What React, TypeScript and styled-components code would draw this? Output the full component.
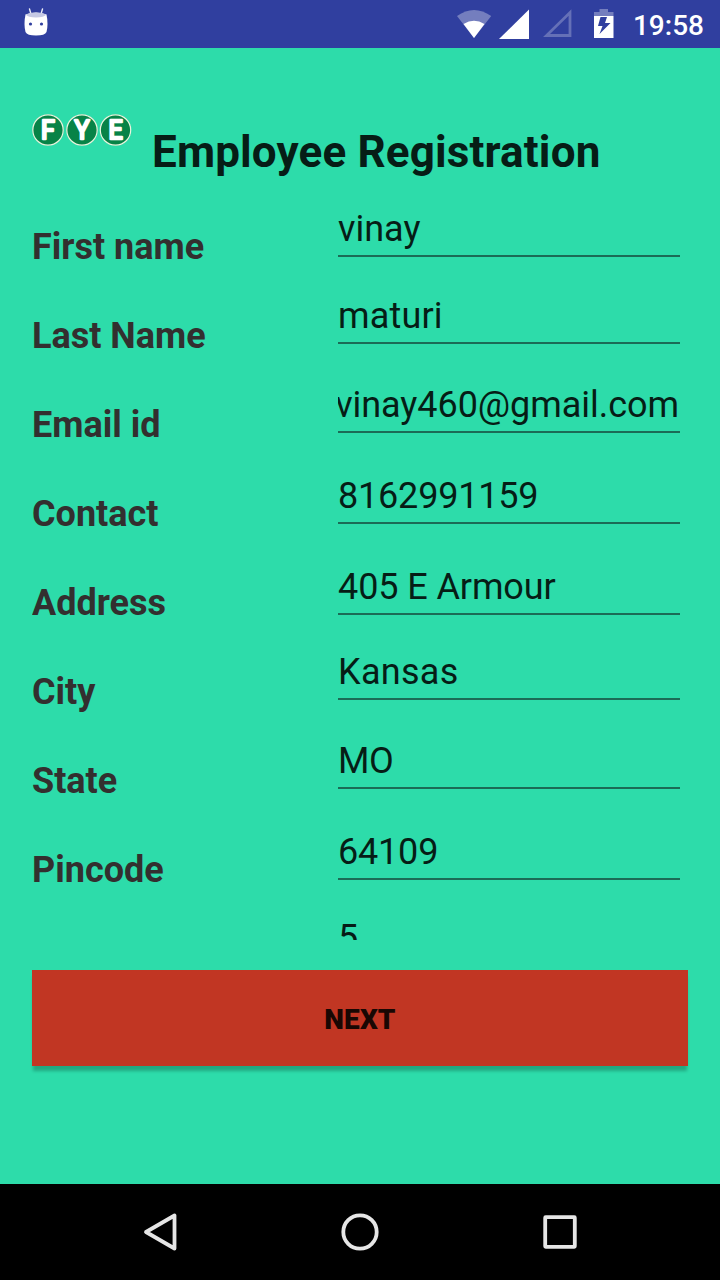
import React from "react";
import styled, { createGlobalStyle } from "styled-components";

const GlobalStyle = createGlobalStyle`
  * { box-sizing: border-box; }
  body { margin: 0; background: #2ddcaa; font-family: Roboto, "Liberation Sans", sans-serif; }
`;

const Screen = styled.div`
  width: 720px;
  height: 1280px;
  display: flex;
  flex-direction: column;
  overflow: hidden;
  background: #2ddcaa;
`;

const StatusBar = styled.header`
  height: 48px;
  flex: none;
  display: flex;
  align-items: center;
  justify-content: space-between;
  background: #303f9f;
  padding: 0 16px 0 20px;
`;

const StatusIcons = styled.div`
  display: flex;
  align-items: center;
`;

const Clock = styled.time`
  margin-left: 12px;
  padding-top: 4px;
  color: #fff;
  font-size: 28px;
  font-weight: 500;
  line-height: 44px;
`;

const Content = styled.main`
  flex: 1;
  padding: 0 32px;
`;

const Heading = styled.div`
  height: 152px;
  display: flex;
  align-items: flex-start;
  gap: 20px;
  padding-top: 65px;
`;

const Title = styled.h1`
  margin: 13px 0 0;
  font-size: 44px;
  line-height: 52px;
  font-weight: 700;
  letter-spacing: 0.15px;
  color: #061d16;
  white-space: nowrap;
`;

const Form = styled.form`
  height: 740px;
  display: grid;
  grid-template-columns: 306px 342px;
  overflow: hidden;
`;

const Labels = styled.div`
  display: flex;
  flex-direction: column;
  gap: 47px;
  padding-top: 26px;
`;

const Label = styled.label`
  font-size: 36px;
  line-height: 42px;
  font-weight: 700;
  color: #332f2f;
`;

const Fields = styled.div`
  display: flex;
  flex-direction: column;
`;

const Field = styled.div<{ $height: number; $scrolled?: boolean; $tracking?: number }>`
  flex: none;
  height: ${(p) => p.$height}px;
  display: flex;
  align-items: flex-end;
  justify-content: ${(p) => (p.$scrolled ? "flex-end" : "flex-start")};
  padding: 0 ${(p) => (p.$scrolled ? 1 : 0)}px 5px 0;
  border-bottom: 2px solid #1b6c56;
  overflow: hidden;
  font-size: 36px;
  line-height: 42px;
  letter-spacing: ${(p) => p.$tracking ?? 0}px;
  color: #061d16;
  white-space: nowrap;
`;

const NextButton = styled.button`
  display: block;
  width: 100%;
  height: 96px;
  margin-top: 30px;
  padding: 3px 0 0;
  border: 0;
  background: #c13623;
  color: #190703;
  font: 900 28px/33px Roboto, "Liberation Sans", sans-serif;
  letter-spacing: 0.1px;
  box-shadow: 0 6px 3px -1px rgba(0, 0, 0, 0.24);
`;

const NavBar = styled.nav`
  height: 96px;
  flex: none;
  display: flex;
  justify-content: center;
  align-items: center;
  gap: 152px;
  background: #000;
`;

const fields = [
  { label: "First name", value: "vinay", height: 57 },
  { label: "Last Name", value: "maturi", height: 87, tracking: 0.15 },
  { label: "Email id", value: "vinay460@gmail.com", height: 89, scrolled: true, tracking: -0.05 },
  { label: "Contact", value: "8162991159", height: 91, tracking: -0.2 },
  { label: "Address", value: "405 E Armour", height: 91, tracking: -0.1 },
  { label: "City", value: "Kansas", height: 85, tracking: 0.3 },
  { label: "State", value: "MO", height: 89, tracking: -0.4 },
  { label: "Pincode", value: "64109", height: 91, tracking: -0.2 },
  { label: "", value: "5", height: 86 },
];

const RobotIcon = () => (
  <svg width="32" height="48" viewBox="20 0 32 48">
    <path d="M29.5 9l1.500 5M42.500 9L41 14" stroke="#e9ebf5" strokeWidth="1.400" strokeLinecap="round" />
    <path d="M25.500 14.500Q36 10.500 46.500 14.500Q48.500 24 46.500 32Q45 35.500 36 35.500T25.500 32Q23.500 24 25.500 14.500Z" fill="#fff" />
    <path d="M25.500 14.500Q36 10.500 46.500 14.500Q44 17.500 36 17.500T25.500 14.500Z" fill="#c5c9e4" />
    <circle cx="30.500" cy="24" r="1.600" fill="#303f9f" />
    <circle cx="41.500" cy="24" r="1.600" fill="#303f9f" />
  </svg>
);

const SignalIcons = () => (
  <svg width="165" height="48" viewBox="456 0 165 48">
    <path d="M457 16Q474 4 491.200 16L474 38Z" fill="#747ebe" />
    <path d="M463.500 24Q474 17.500 484.500 24L474 38Z" fill="#fff" />
    <path d="M529 9.500V39H499Z" fill="#fff" />
    <path d="M570 12.500V35.500H546.500Z" fill="none" stroke="#6570b7" strokeWidth="2.800" />
    <path d="M594 16V12h5.500V9h8.500v3h5.500v4Z" fill="#747ebe" />
    <path d="M594 16h19.500v22H594Z" fill="#fff" />
    <path d="M600.500 17h6.500l-2 6h5.500L599.500 34l3-8h-4.500Z" fill="#303f9f" />
  </svg>
);

const LogoMark = styled.svg`
  flex: none;
  text {
    font: 400 25px Roboto, "Liberation Sans", sans-serif;
    fill: #fff;
    stroke: #fff;
    stroke-width: 2.4px;
    stroke-linejoin: round;
    text-anchor: middle;
  }
`;

const Logo = () => (
  <LogoMark width="100" height="34" viewBox="32 113 100 34">
    {[["F", 48], ["Y", 82], ["E", 115.5]].map(([letter, x]) => (
      <g key={letter}>
        <circle cx={x} cy="130" r="15.500" fill="#078347" />
        <circle cx={x} cy="130" r="15.200" fill="none" stroke="#e9f5df" strokeWidth="1.200" />
        <text x={x} y="139">{letter}</text>
      </g>
    ))}
  </LogoMark>
);

export default function App() {
  return (
    <>
      <GlobalStyle />
      <Screen>
        <StatusBar>
          <RobotIcon />
          <StatusIcons>
            <SignalIcons />
            <Clock>19:58</Clock>
          </StatusIcons>
        </StatusBar>
        <Content>
          <Heading>
            <Logo />
            <Title>Employee Registration</Title>
          </Heading>
          <Form>
            <Labels>
              {fields.filter((f) => f.label).map((f) => (
                <Label key={f.label}>{f.label}</Label>
              ))}
            </Labels>
            <Fields>
              {fields.map((f) => (
                <Field key={f.value} $height={f.height} $scrolled={f.scrolled} $tracking={f.tracking}>
                  {f.value}
                </Field>
              ))}
            </Fields>
          </Form>
          <NextButton type="button">NEXT</NextButton>
        </Content>
        <NavBar>
          <svg width="48" height="48" viewBox="136 1208 48 48">
            <path d="M174.500 1215.500V1248.500L146 1232Z" fill="none" stroke="#e6e6e6" strokeWidth="3.800" strokeLinejoin="round" />
          </svg>
          <svg width="48" height="48" viewBox="336 1208 48 48">
            <circle cx="360" cy="1232" r="16.700" fill="none" stroke="#e6e6e6" strokeWidth="3.800" />
          </svg>
          <svg width="48" height="48" viewBox="536 1208 48 48">
            <rect x="545.200" y="1217.200" width="29.600" height="29.600" rx="0.500" fill="none" stroke="#e6e6e6" strokeWidth="3.800" strokeLinejoin="round" />
          </svg>
        </NavBar>
      </Screen>
    </>
  );
}
